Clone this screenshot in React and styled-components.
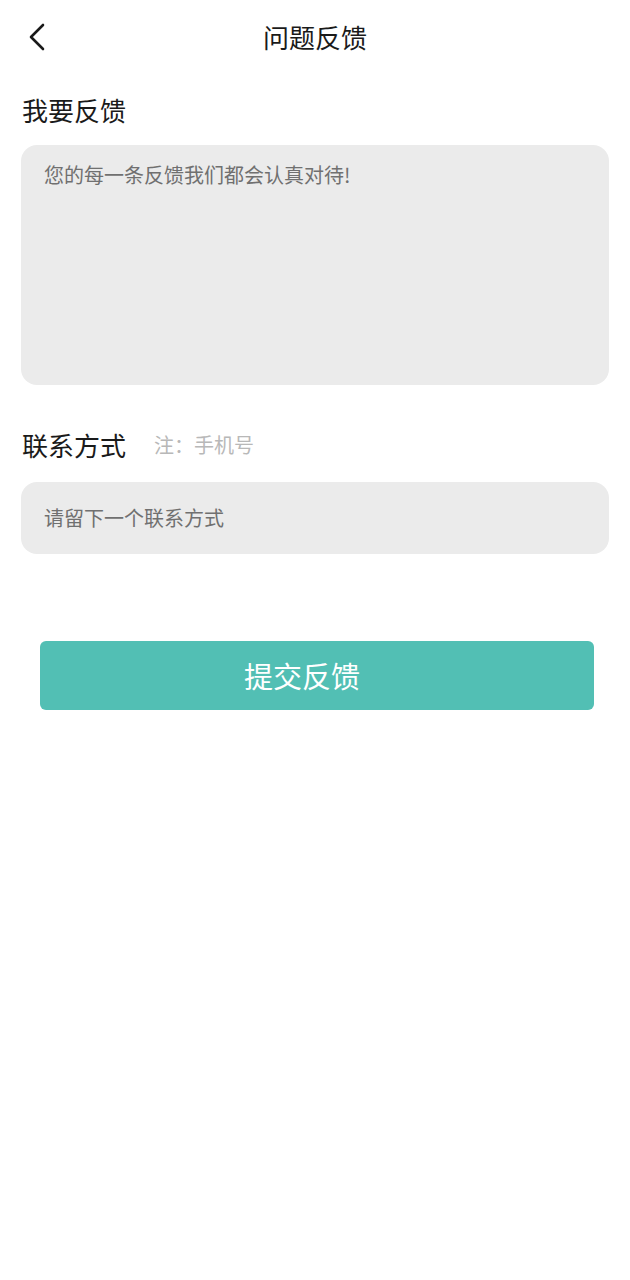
import React from "react";
import styled, { createGlobalStyle } from "styled-components";

const Global = createGlobalStyle`
  html, body { margin: 0; padding: 0; background: #fff; }
  body { font-family: "Noto Sans CJK SC", "Noto Sans", sans-serif; }
  * { box-sizing: border-box; }
`;

const Page = styled.div`
  width: 630px;
  min-height: 1280px;
  background: #fff;
  display: flex;
  flex-direction: column;
`;

const Header = styled.div`
  height: 74px;
  display: flex;
  align-items: center;
  justify-content: center;
  position: relative;
`;

const Back = styled.button`
  position: absolute;
  left: 24px;
  top: 20px;
  width: 28px;
  height: 34px;
  border: none;
  background: none;
  padding: 0;
  display: flex;
  align-items: center;
  justify-content: center;
`;

const Title = styled.h1`
  margin: 0;
  font-size: 26px;
  font-weight: 400;
  color: #1a1a1a;
  line-height: 1;
`;

const Content = styled.div`
  padding: 0 21px;
  display: flex;
  flex-direction: column;
`;

const LabelRow = styled.div`
  display: flex;
  align-items: center;
  gap: 28px;
  height: ${(p) => p.h}px;
  padding-left: 1px;
  padding-top: ${(p) => p.pt || 0}px;
`;

const Label = styled.span`
  font-size: 26px;
  color: #1a1a1a;
  line-height: 1;
`;

const Note = styled.span`
  font-size: 20px;
  color: #b8b8b8;
  line-height: 1;
`;

const Field = styled.div`
  background: #ebebeb;
  border-radius: 16px;
  height: ${(p) => p.h}px;
  padding: ${(p) => (p.multi ? "18px 23px" : "0 23px")};
  display: flex;
  align-items: ${(p) => (p.multi ? "flex-start" : "center")};
  font-size: 20px;
  color: #707070;
  line-height: 1.2;
`;

const SubmitWrap = styled.div`
  padding: 87px 36px 0 40px;
`;

const Submit = styled.button`
  width: 100%;
  height: 69px;
  border: none;
  border-radius: 6px;
  background: #52bfb4;
  color: #fff;
  font-family: inherit;
  font-size: 29px;
  padding: 0 30px 0 0;
  line-height: 1;
`;

export default function App() {
  return (
    <Page>
      <Global />
      <Header>
        <Back aria-label="back">
          <svg width="20" height="30" viewBox="0 0 20 30">
            <polyline
              points="15,3 3,15 15,27"
              fill="none"
              stroke="#1a1a1a"
              strokeWidth="2.6"
              strokeLinecap="round"
              strokeLinejoin="round"
            />
          </svg>
        </Back>
        <Title>问题反馈</Title>
      </Header>
      <Content>
        <LabelRow h={71}>
          <Label>我要反馈</Label>
        </LabelRow>
        <Field h={240} multi>
          您的每一条反馈我们都会认真对待!
        </Field>
        <LabelRow h={97} pt={22}>
          <Label>联系方式</Label>
          <Note>注：手机号</Note>
        </LabelRow>
        <Field h={72}>请留下一个联系方式</Field>
      </Content>
      <SubmitWrap>
        <Submit>提交反馈</Submit>
      </SubmitWrap>
    </Page>
  );
}
